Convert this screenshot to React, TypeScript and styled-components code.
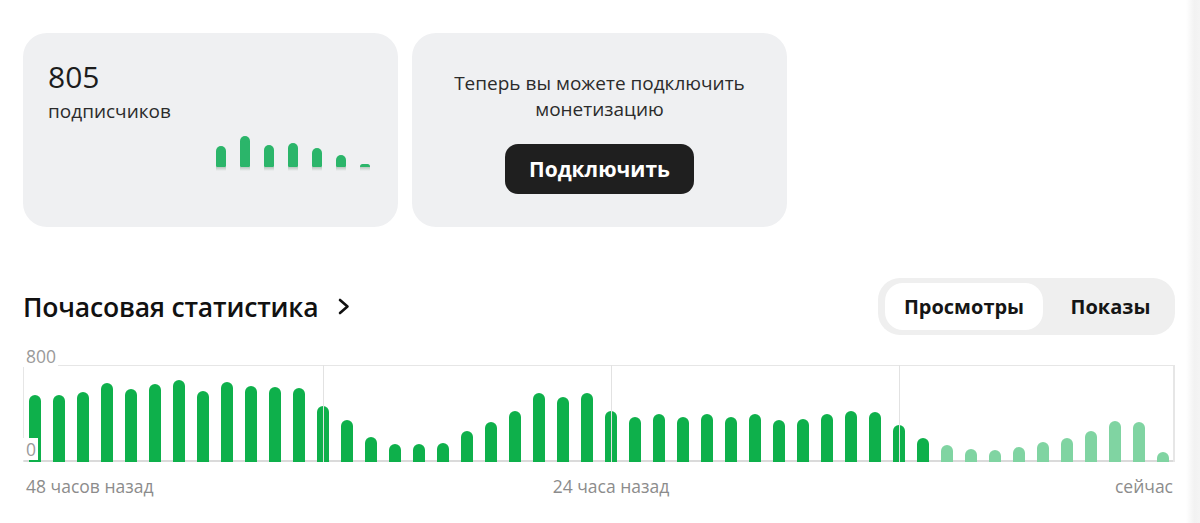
import React from 'react';
import styled, { createGlobalStyle } from 'styled-components';

const GlobalStyle = createGlobalStyle`
    html, body {
        margin: 0;
        padding: 0;
        background: #ffffff;
    }
    body {
        font-family: "Open Sans", "Noto Sans", Arial, sans-serif;
        color: #1a1a1a;
    }
`;

// hourly views for the last 48 hours, oldest first
const hourly = [
    553, 553, 577, 652, 602, 643, 676, 586, 660, 627, 619, 610,
    462, 346, 206, 148, 148, 157, 256, 330, 421, 569, 536, 569,
    421, 371, 396, 371, 396, 371, 396, 346, 355, 396, 421, 412,
    305, 198, 140, 107, 99, 124, 165, 198, 256, 338, 330, 82,
];
const MAX_VALUE = 800;
const PLOT_HEIGHT = 97;
const PENDING_FROM = 38;

const subscribersTrend = [21, 31, 22, 24, 19, 12, 3];

const Page = styled.div`
    display: flex;
    min-height: 523px;
`;

const Main = styled.main`
    flex: 1;
    padding: 33px 0 0 23px;
`;

const Edge = styled.div`
    width: 14px;
    background: linear-gradient(to right, #ffffff, #f2f2f2 60%, #f4f4f4);
`;

const Cards = styled.div`
    display: flex;
    gap: 14px;
`;

const Card = styled.div`
    width: 375px;
    height: 194px;
    box-sizing: border-box;
    background: #eff0f2;
    border-radius: 24px;
    display: flex;
    flex-direction: column;
`;

const SubscribersCard = styled(Card)`
    padding: 26px 28px 60px 25px;
`;

const Count = styled.div`
    font-size: 30px;
    line-height: 36px;
    font-weight: 500;
    color: #1c1c1c;
`;

const CountLabel = styled.div`
    margin-top: 4px;
    font-size: 19px;
    line-height: 24px;
    color: #2b2b2b;
`;

const Spark = styled.div`
    margin-top: auto;
    display: flex;
    justify-content: flex-end;
    align-items: flex-end;
    gap: 14px;
`;

const SparkBar = styled.div`
    position: relative;
    width: 10px;
    background: #2bb56a;
    border-radius: 5px 5px 1px 1px;

    &::after {
        content: '';
        position: absolute;
        left: 0;
        right: 0;
        top: 100%;
        height: 4px;
        background: linear-gradient(#b8c7be, rgba(239, 240, 242, 0));
    }
`;

const MonetizationCard = styled(Card)`
    align-items: center;
    justify-content: center;
    gap: 22px;
    padding-top: 4px;
`;

const Notice = styled.p`
    margin: 0;
    text-align: center;
    font-size: 19px;
    line-height: 26px;
    color: #2b2b2b;
`;

const ConnectButton = styled.button`
    width: 189px;
    height: 50px;
    border: none;
    border-radius: 13px;
    background: #1f1f1f;
    color: #ffffff;
    font-family: inherit;
    font-size: 21px;
    font-weight: 700;
    cursor: pointer;
`;

const SectionHead = styled.div`
    width: 1152px;
    margin-top: 51px;
    display: flex;
    align-items: center;
    justify-content: space-between;
`;

const TitleLink = styled.a`
    display: flex;
    align-items: center;
    gap: 19px;
    color: #111111;
    text-decoration: none;
    cursor: pointer;
`;

const Title = styled.h2`
    margin: 0;
    font-size: 26.5px;
    font-weight: 600;
    letter-spacing: -0.2px;
`;

const Tabs = styled.div`
    display: flex;
    padding: 5px 7px;
    border-radius: 22px;
    background: #efefef;
`;

const Tab = styled.button<{ $active?: boolean }>`
    height: 47px;
    padding: ${p => (p.$active ? '0' : '0 0 0 10px')};
    width: ${p => (p.$active ? '158px' : '125px')};
    border: none;
    border-radius: 18px;
    background: ${p => (p.$active ? '#ffffff' : 'transparent')};
    color: #151515;
    font-family: inherit;
    font-size: 20px;
    font-weight: 700;
    cursor: pointer;
`;

const Chart = styled.div`
    width: 1152px;
    margin-top: 30px;
`;

const Plot = styled.div`
    position: relative;
    height: ${PLOT_HEIGHT}px;
    display: flex;
    align-items: flex-end;
    box-shadow: inset 1px 1px 0 #e6e6e6, inset -2px 0 0 #e6e6e6, inset 0 -2px 0 #dadada;
`;

const Slot = styled.div`
    width: 24px;
    display: flex;
    justify-content: center;
`;

const Bar = styled.div<{ $pending?: boolean }>`
    width: 12px;
    border-radius: 6px 6px 0 0;
    background: ${p => (p.$pending ? '#80d4a2' : '#0eb04b')};
`;

const GridLine = styled.div`
    position: absolute;
    top: 0;
    bottom: 0;
    width: 1px;
    background: #e2e2e2;
`;

const AxisValue = styled.span<{ $top?: boolean }>`
    position: absolute;
    left: 0;
    ${p => (p.$top ? 'top: -20px;' : 'bottom: 2px;')}
    padding: 1px 2px 1px 3px;
    background: #ffffff;
    font-size: 17.5px;
    line-height: 20px;
    color: #9a9a9a;
`;

const TimeAxis = styled.div`
    position: relative;
    display: flex;
    justify-content: space-between;
    margin-top: 12px;
    padding: 0 2px 0 3px;
    font-size: 17.5px;
    line-height: 24px;
    color: #8c8c8c;
`;

const MidTick = styled.span`
    position: absolute;
    top: 0;
    left: 588px;
    transform: translateX(-50%);
`;

const Chevron = () => (
    <svg width="14" height="19" viewBox="0 0 14 19" fill="none">
        <path d="M3 3 L10.5 9.5 L3 16" stroke="#111" strokeWidth="2.6" strokeLinecap="round" strokeLinejoin="round" />
    </svg>
);

const App = () => {
    return (
        <Page>
            <GlobalStyle />
            <Main>
                <Cards>
                    <SubscribersCard>
                        <Count>805</Count>
                        <CountLabel>подписчиков</CountLabel>
                        <Spark>
                            {subscribersTrend.map((h, i) => (
                                <SparkBar key={i} style={{ height: h }} />
                            ))}
                        </Spark>
                    </SubscribersCard>
                    <MonetizationCard>
                        <Notice>
                            Теперь вы можете подключить
                            <br />
                            монетизацию
                        </Notice>
                        <ConnectButton>Подключить</ConnectButton>
                    </MonetizationCard>
                </Cards>

                <SectionHead>
                    <TitleLink>
                        <Title>Почасовая статистика</Title>
                        <Chevron />
                    </TitleLink>
                    <Tabs>
                        <Tab $active>Просмотры</Tab>
                        <Tab>Показы</Tab>
                    </Tabs>
                </SectionHead>

                <Chart>
                    <Plot>
                        {[12, 24, 36].map(n => (
                            <GridLine key={n} style={{ left: n * 24 + 12 }} />
                        ))}
                        {hourly.map((v, i) => (
                            <Slot key={i}>
                                <Bar
                                    $pending={i >= PENDING_FROM}
                                    style={{ height: Math.round((v / MAX_VALUE) * PLOT_HEIGHT) }}
                                />
                            </Slot>
                        ))}
                        <AxisValue $top>800</AxisValue>
                        <AxisValue>0</AxisValue>
                    </Plot>
                    <TimeAxis>
                        <span>48 часов назад</span>
                        <MidTick>24 часа назад</MidTick>
                        <span>сейчас</span>
                    </TimeAxis>
                </Chart>
            </Main>
            <Edge />
        </Page>
    );
};

export default App;
